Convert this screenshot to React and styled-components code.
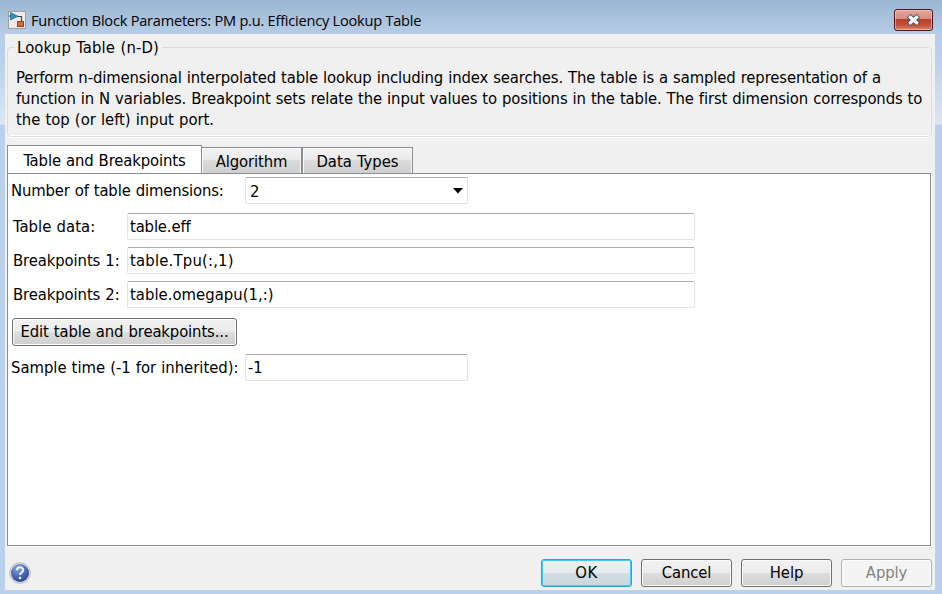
import React from 'react';
import styled, { createGlobalStyle } from 'styled-components';

const Global = createGlobalStyle`
  * { box-sizing: border-box; }
  body { margin: 0; overflow: hidden; }
  button, input { font: inherit; color: inherit; letter-spacing: inherit; word-spacing: inherit; }
`;

const Window = styled.div`
  width: 942px;
  height: 594px;
  display: flex;
  flex-direction: column;
  padding: 0 7px 4px 5px;
  background: linear-gradient(#9bb5d2 0, #b6cde6 34px, #bad1ea 60px, #dbe7f4 124px, #b9d1ea 125px);
  font: 16.5px/21px 'DejaVu Sans Condensed', 'DejaVu Sans', sans-serif;
  font-stretch: condensed;
  letter-spacing: -0.12px;
  word-spacing: 0.45px;
  color: #000;
`;

const TitleBar = styled.header`
  height: 34px;
  flex: none;
  display: flex;
  align-items: flex-start;
  padding: 9px 2px 0 3px;

  > svg { margin-top: 2px; }
`;

const Title = styled.h1`
  margin: 1px 0 0 5px;
  flex: 1;
  font: 14.6px/20px 'Open Sans', sans-serif;
  letter-spacing: -0.235px;
  word-spacing: 0;
`;

const CloseButton = styled.button`
  width: 39px;
  height: 22px;
  padding: 0;
  display: grid;
  place-items: center;
  border: 1px solid #4b1520;
  border-radius: 3px;
  background: linear-gradient(#e6a69a, #d98b7d 45%, #b8402b 47%, #c2503a 75%, #dd8570);
  box-shadow: inset 0 0 0 1px rgba(255, 215, 205, .55);
`;

const Body = styled.main`
  flex: 1;
  display: flex;
  flex-direction: column;
  padding: 3px 3px 0 2px;
  background: #f0f0f0;
`;

const Group = styled.fieldset`
  margin: 0;
  height: 100px;
  flex: none;
  padding: 9px 4px 0 8px;
  border: 1px solid #d5dfe5;
  border-radius: 4px;
  box-shadow: inset 0 -1px #fff, 0 1px #fff;
`;

const Legend = styled.legend`
  margin-left: -1px;
  padding: 0 3px 0 2px;
  letter-spacing: 0.15px;
`;

const Line = styled.div`
  white-space: pre;
  letter-spacing: ${p => p.$ls ?? -0.12}px;
`;

const Tabs = styled.nav`
  display: flex;
  align-items: flex-end;
  height: 28px;
  margin-top: 8px;
  flex: none;
`;

const Tab = styled.div`
  width: ${p => p.$w}px;
  height: ${p => (p.$active ? 29 : 26)}px;
  margin-bottom: ${p => (p.$active ? -1 : 0)}px;
  padding-top: ${p => (p.$active ? 4 : 3)}px;
  text-align: center;
  white-space: nowrap;
  border: 1px solid #898c95;
  border-left-width: ${p => (p.$joined ? 0 : 1)}px;
  border-bottom: 0;
  background: ${p => (p.$active ? '#fff' : 'linear-gradient(#f2f2f2, #ebebeb 45%, #dbdbdb 50%, #cfcfcf)')};
  box-shadow: ${p => (p.$active ? 'none' : 'inset 1px 1px #fafafa, inset -1px 0 #f4f4f4')};
  letter-spacing: ${p => p.$ls ?? -0.12}px;
`;

const Panel = styled.section`
  height: 373px;
  flex: none;
  margin-right: 1px;
  border: 1px solid #898c95;
  background: #fff;
  box-shadow: 1px 1px #fff;
  padding: 3px;
`;

const Row = styled.label`
  display: flex;
  height: 27px;
  margin-top: ${p => p.$gap || 0}px;
`;

const Label = styled.span`
  width: ${p => p.$w}px;
  padding: 3px 0 0 ${p => p.$indent || 0}px;
  white-space: nowrap;
  letter-spacing: ${p => p.$ls ?? -0.1}px;
`;

const Field = styled.input`
  width: ${p => p.$w}px;
  height: 27px;
  padding: 0 2px;
  border: 1px solid #e2e3ea;
  border-top-color: #abadb3;
  border-radius: 2px;
  background: #fff;
  outline: 0;
  letter-spacing: ${p => p.$ls ?? 0}px;
`;

const Combo = styled.div`
  width: 223px;
  height: 27px;
  display: flex;
  align-items: center;
  justify-content: space-between;
  padding: 1px 4px 0;
  border: 1px solid #e2e3ea;
  border-top-color: #abadb3;
  border-radius: 2px;
`;

const Button = styled.button`
  width: ${p => p.$w || 91}px;
  height: 28px;
  padding: 0 0 1px;
  white-space: nowrap;
  border: 1px solid #707070;
  border-radius: 3px;
  background: linear-gradient(#f2f2f2, #ebebeb 49%, #dddddd 50%, #cfcfcf);
  box-shadow: inset 0 0 0 1px #fcfcfc;
  ${p => p.$primary && `
    border-color: #3c9fc4;
    background: linear-gradient(#eef2f4, #e4ebee 49%, #d3dde3 50%, #cad6de);
    box-shadow: inset 0 0 0 1px #3fcdf3;
    letter-spacing: 0.5px;
  `}
  &:disabled {
    color: #838383;
    border-color: #adb2b5;
    background: #f4f4f4;
  }
`;

const EditRow = styled.div`
  margin: 10px 0 8px 1px;
  height: 28px;
`;

const Footer = styled.footer`
  display: flex;
  align-items: flex-start;
  gap: 9px;
  padding-top: 13px;
`;

const HelpIcon = styled.svg`
  margin: 3px auto 0 2px;
`;

const BlockIcon = () => (
  <svg width="18" height="18" viewBox="0 0 18 18">
    <rect x=".5" y=".5" width="17" height="17" fill="#ececec" stroke="#a3a09c" />
    <path d="M1 5H3M9 5.5H13.5V10" fill="none" stroke="#444" strokeWidth="1.2" />
    <path d="M2.5 1.5L10 5.2L2.5 9Z" fill="#2f8fc4" stroke="#24678f" strokeWidth=".7" />
    <rect x="9.5" y="10.5" width="6" height="5" fill="#e0643a" stroke="#a23c1e" />
  </svg>
);

const CloseIcon = () => (
  <svg width="15" height="14" viewBox="0 0 15 14">
    <path d="M2.6 2.8L12.4 11.2M12.4 2.8L2.6 11.2" stroke="#4a5564" strokeWidth="5.4" />
    <path d="M3.2 3.3L11.8 10.7M11.8 3.3L3.2 10.7" stroke="#f6f6f6" strokeWidth="3.2" />
  </svg>
);

export default function App() {
  return (
    <Window>
      <Global />
      <TitleBar>
        <BlockIcon />
        <Title>Function Block Parameters: PM p.u. Efficiency Lookup Table</Title>
        <CloseButton aria-label="Close"><CloseIcon /></CloseButton>
      </TitleBar>
      <Body>
        <Group>
          <Legend>Lookup Table (n-D)</Legend>
          <Line>Perform n-dimensional interpolated table lookup including index searches. The table is a sampled representation of a</Line>
          <Line>function in N variables. Breakpoint sets relate the input values to positions in the table. The first dimension corresponds to</Line>
          <Line $ls={-0.02}>the top (or left) input port.</Line>
        </Group>
        <Tabs>
          <Tab $w={195} $active>Table and Breakpoints</Tab>
          <Tab $w={100} $joined>Algorithm</Tab>
          <Tab $w={111} $ls={0}>Data Types</Tab>
        </Tabs>
        <Panel>
          <Row>
            <Label $w={234} $ls={-0.15}>Number of table dimensions:</Label>
            <Combo>
              2
              <svg width="10" height="6" viewBox="0 0 10 6"><path d="M0 0H10L5 5.5Z" /></svg>
            </Combo>
          </Row>
          <Row $gap={9}>
            <Label $w={116} $indent={2} $ls={0.05}>Table data:</Label>
            <Field $w={568} $ls={-0.15} defaultValue="table.eff" />
          </Row>
          <Row $gap={7}>
            <Label $w={116} $indent={2}>Breakpoints 1:</Label>
            <Field $w={568} $ls={0.2} defaultValue="table.Tpu(:,1)" />
          </Row>
          <Row $gap={7}>
            <Label $w={116} $indent={2}>Breakpoints 2:</Label>
            <Field $w={568} $ls={0.03} defaultValue="table.omegapu(1,:)" />
          </Row>
          <EditRow><Button $w={225}>Edit table and breakpoints...</Button></EditRow>
          <Row>
            <Label $w={234} $ls={-0.03}>Sample time (-1 for inherited):</Label>
            <Field $w={223} defaultValue="-1" />
          </Row>
        </Panel>
        <Footer>
          <HelpIcon width="22" height="22" viewBox="0 0 22 22">
            <defs>
              <radialGradient id="ball" cx=".4" cy=".25" r=".8">
                <stop offset="0" stopColor="#8ba6de" />
                <stop offset=".6" stopColor="#4566b2" />
                <stop offset="1" stopColor="#24428c" />
              </radialGradient>
            </defs>
            <circle cx="11" cy="11" r="10.4" fill="#dcdcdc" stroke="#b4b4b4" strokeWidth=".8" />
            <circle cx="11" cy="11" r="9" fill="url(#ball)" />
            <path d="M7.8 8.3C7.8 4.3 14.2 4.3 14.2 8C14.2 10.5 11 10.5 11 13" fill="none" stroke="#f2f5fb" strokeWidth="2" />
            <circle cx="11" cy="16" r="1.3" fill="#f2f5fb" />
          </HelpIcon>
          <Button $primary>OK</Button>
          <Button>Cancel</Button>
          <Button>Help</Button>
          <Button disabled>Apply</Button>
        </Footer>
      </Body>
    </Window>
  );
}
